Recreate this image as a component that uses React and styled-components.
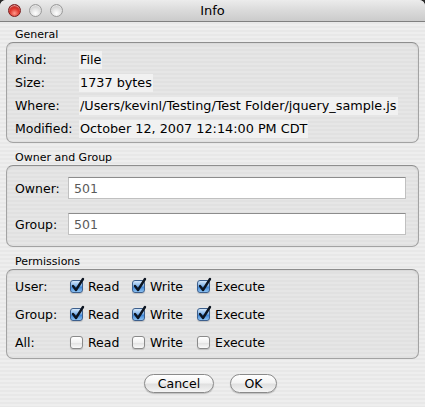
import React from "react";
import styled, { createGlobalStyle } from "styled-components";

const GlobalStyle = createGlobalStyle`
	html, body {
		margin: 0;
		padding: 0;
		background: #2a2a2a;
	}
	body {
		font-family: "DejaVu Sans", "Liberation Sans", sans-serif;
		color: #000;
	}
`;

const Window = styled.div`
	width: 425px;
	height: 407px;
	display: flex;
	flex-direction: column;
	border-radius: 6px 6px 0 0;
	overflow: hidden;
	background: repeating-linear-gradient(
		to bottom,
		#eeeeee 0px,
		#eeeeee 2px,
		#e8e8e8 2px,
		#e8e8e8 4px
	);
`;

const TitleBar = styled.div`
	height: 21px;
	flex-shrink: 0;
	position: relative;
	display: flex;
	align-items: center;
	justify-content: center;
	background: linear-gradient(to bottom, #ececec 0%, #dadada 50%, #cbcbcb 100%);
	border-bottom: 1px solid #7f7f7f;
	font-size: 13px;
`;

const Lights = styled.div`
	position: absolute;
	left: 8px;
	top: 4px;
	display: flex;
	gap: 8px;
`;

const Light = styled.div`
	width: 13px;
	height: 13px;
	border-radius: 50%;
	box-sizing: border-box;
	border: 1px solid ${({ red }) => (red ? "#7a1c1c" : "#9a9a9a")};
	background: ${({ red }) =>
		red
			? "radial-gradient(circle at 50% 75%, #ff9a8c 0%, #e0392f 45%, #a3120e 100%)"
			: "radial-gradient(circle at 50% 75%, #ffffff 0%, #dcdcdc 55%, #b4b4b4 100%)"};
	box-shadow: inset 0 1px 1px rgba(255, 255, 255, 0.6);
`;

const Content = styled.div`
	display: flex;
	flex-direction: column;
	padding: 6px 6px 0 6px;
`;

const Caption = styled.div`
	font-size: 11px;
	line-height: 13px;
	padding-left: 9px;
	margin-top: ${({ first }) => (first ? "0" : "8px")};
	margin-bottom: 1px;
`;

const Box = styled.div`
	box-sizing: border-box;
	border: 1px solid #a3a3a3;
	border-top-color: #8e8e8e;
	border-radius: 7px;
	background: repeating-linear-gradient(
		to bottom,
		#e6e6e6 0px,
		#e6e6e6 2px,
		#e1e1e1 2px,
		#e1e1e1 4px
	);
	box-shadow: inset 0 1px 2px rgba(0, 0, 0, 0.08);
	padding: ${({ pad }) => pad};
`;

const InfoRow = styled.div`
	display: flex;
	align-items: center;
	height: 23px;
	font-size: 12.5px;
`;

const Label = styled.div`
	width: ${({ w }) => w || "64px"};
	flex-shrink: 0;
	font-size: 12.5px;
`;

const Value = styled.span`
	background: #f1f1f1;
	padding: 1px 1px;
	line-height: 16px;
	font-size: 12.8px;
	white-space: nowrap;
`;

const FieldRow = styled.div`
	display: flex;
	align-items: center;
	margin-top: ${({ first }) => (first ? "0" : "14px")};
`;

const Field = styled.div`
	flex: 1;
	height: 22px;
	box-sizing: border-box;
	background: #fff;
	border: 1px solid #c0c0c0;
	border-top-color: #8c8c8c;
	padding-left: 5px;
	display: flex;
	align-items: center;
	font-size: 12.5px;
	color: #5a5a5a;
`;

const PermGrid = styled.div`
	display: grid;
	grid-template-columns: 55px 62px 65px auto;
	grid-auto-rows: 28px;
	align-items: center;
	font-size: 12.5px;
`;

const Check = styled.label`
	display: flex;
	align-items: center;
	gap: 5px;
`;

const Box13 = styled.span`
	position: relative;
	width: 13px;
	height: 13px;
	box-sizing: border-box;
	border-radius: 3px;
	border: 1px solid ${({ on }) => (on ? "#3d5f8c" : "#8a8a8a")};
	background: ${({ on }) =>
		on
			? "linear-gradient(to bottom, #d5e8fb 0%, #7fb2e8 45%, #3f86d6 55%, #8ec3f3 100%)"
			: "linear-gradient(to bottom, #ffffff 0%, #f1f1f1 50%, #e2e2e2 55%, #fafafa 100%)"};
	box-shadow: 0 1px 1px rgba(0, 0, 0, 0.15);
`;

const Tick = styled.svg`
	position: absolute;
	left: 0px;
	top: -3px;
	overflow: visible;
`;

const Footer = styled.div`
	display: flex;
	justify-content: center;
	gap: 16px;
	margin-top: 15px;
	padding-right: 4px;
`;

const Button = styled.div`
	width: ${({ w }) => w};
	height: 19px;
	box-sizing: border-box;
	border-radius: 10px;
	border: 1px solid #8a8a8a;
	background: linear-gradient(to bottom, #ffffff 0%, #f3f3f3 45%, #e0e0e0 55%, #f4f4f4 100%);
	box-shadow: 0 1px 1px rgba(0, 0, 0, 0.2);
	display: flex;
	align-items: center;
	justify-content: center;
	font-size: 12.5px;
`;

function CheckBox({ on, children }) {
	return (
		<Check>
			<Box13 on={on ? 1 : 0}>
				{on && (
					<Tick width="13" height="14" viewBox="0 0 13 14">
						<path
							d="M2 8 L5 12 L12 1"
							fill="none"
							stroke="#0c1420"
							strokeWidth="2.4"
							strokeLinecap="round"
							strokeLinejoin="round"
						/>
					</Tick>
				)}
			</Box13>
			{children}
		</Check>
	);
}

const info = [
	["Kind:", "File"],
	["Size:", "1737 bytes"],
	["Where:", "/Users/kevinl/Testing/Test Folder/jquery_sample.js"],
	["Modified:", "October 12, 2007 12:14:00 PM CDT"],
];

const perms = [
	["User:", [true, true, true]],
	["Group:", [true, true, true]],
	["All:", [false, false, false]],
];

function App() {
	return (
		<>
			<GlobalStyle />
			<Window>
				<TitleBar>
					<Lights>
						<Light red />
						<Light />
						<Light />
					</Lights>
					Info
				</TitleBar>
				<Content>
					<Caption first>General</Caption>
					<Box pad="5px 8px 2px 8px">
						{info.map(([k, v]) => (
							<InfoRow key={k}>
								<Label>{k}</Label>
								<Value>{v}</Value>
							</InfoRow>
						))}
					</Box>

					<Caption>Owner and Group</Caption>
					<Box pad="11px 12px 11px 8px">
						<FieldRow first>
							<Label w="53px">Owner:</Label>
							<Field>501</Field>
						</FieldRow>
						<FieldRow>
							<Label w="53px">Group:</Label>
							<Field>501</Field>
						</FieldRow>
					</Box>

					<Caption>Permissions</Caption>
					<Box pad="2px 8px 2px 8px">
						<PermGrid>
							{perms.map(([k, on]) => (
								<React.Fragment key={k}>
									<div>{k}</div>
									<CheckBox on={on[0]}>Read</CheckBox>
									<CheckBox on={on[1]}>Write</CheckBox>
									<CheckBox on={on[2]}>Execute</CheckBox>
								</React.Fragment>
							))}
						</PermGrid>
					</Box>

					<Footer>
						<Button w="70px">Cancel</Button>
						<Button w="47px">OK</Button>
					</Footer>
				</Content>
			</Window>
		</>
	);
}

export default App;
